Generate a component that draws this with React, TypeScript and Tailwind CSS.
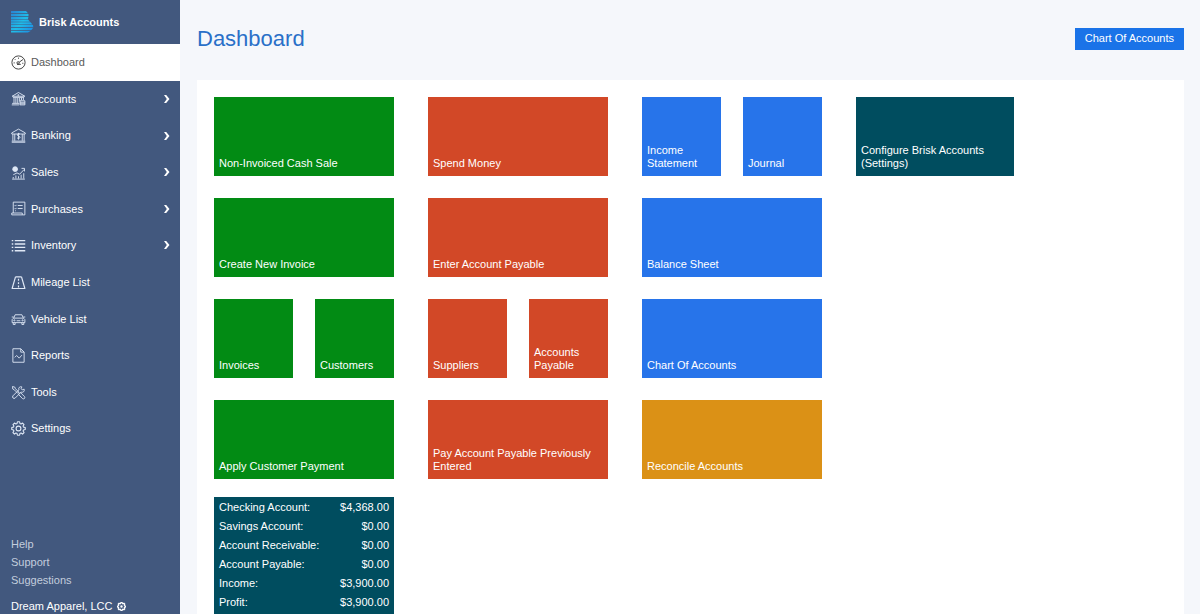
import type { ReactNode } from "react";
import clsx from "clsx";

const GEAR =
  "M8.6 1h2.8l.5 2.3 1.5.6 2-1.2 2 2-1.3 2 .6 1.5 2.3.5v2.7l-2.3.5-.6 1.5 1.3 2-2 2-2-1.3-1.5.6-.5 2.3H8.6l-.5-2.3-1.5-.6-2 1.3-2-2 1.3-2-.6-1.5L1 11.4V8.7l2.3-.5.6-1.5-1.3-2 2-2 2 1.2 1.5-.6z";

const ICONS: Record<string, ReactNode> = {
  Dashboard: (
    <>
      <circle cx="10" cy="10" r="8.8" />
      <circle cx="9.500" cy="10.500" r="1.600" />
      <path d="M11 9.500 16 6M8 12.500h5M10 3.500v1.500M5 5.500l1 1M3.500 10.500H5M15 11h1.500" />
    </>
  ),
  Accounts: (
    <>
      <path d="M1.500 7 10 2l8.500 5zM2.500 8.500h15M4 9v7M6.500 9v7M9 9v7M11.500 9v5M14 9v3M16.500 9v3M1.500 16.500H11M1 18.500h10" />
      <circle cx="9.800" cy="5.500" r=".8" />
      <path d="M12 13h6.500v5.500H12zM12 15h6.500M12 17h6.500" />
    </>
  ),
  Banking: (
    <>
      <path d="M1 6.500 10 1.500l9 5v1.500H1zM2.500 8v9M5 8v9M15 8v9M17.500 8v9M1 17.500h18M1 19h18" />
      <path d="M12 8.500c-.5-1-3.500-1.200-3.700.6-.2 2 3.700 1.200 3.700 3.300 0 2-3.500 1.800-4 .4M10 6.500v9" />
    </>
  ),
  Sales: (
    <>
      <circle cx="5.500" cy="5.500" r="3.200" fill="currentColor" />
      <path d="m3 13 5-2.500 3.500 1.800L17.500 6M14 4.500h4V8.500M3 18v-2M6.500 18v-4M10 18v-3M13.500 18v-5M17 18v-7M1.500 18.800h17" />
    </>
  ),
  Purchases: (
    <>
      <path d="M3 16V1.500h15.500V16M1 16h14v2.500h3.500V16M1 16v2.500h14" />
      <path d="m5 6 .8.800L7.200 5.200M9 6h6.500M5 10l.8.800 1.400-1.600M9 10h6.500M5.500 13h1" />
    </>
  ),
  Inventory: (
    <path d="M1 3.500h2M5 3.500h14M1 8h2M5 8h14M1 12.500h2M5 12.500h14M1 17h2M5 17h14" strokeWidth="1.800" />
  ),
  "Mileage List": (
    <path d="M6 2.500h8M5.500 18h9M6 2.500 1.500 18h4M14 2.500 18.500 18h-4M10 5v2.500M10 9.500V12M10 14v2.500" strokeWidth="1.600" />
  ),
  "Vehicle List": (
    <>
      <path d="M3.500 9.500 5.500 5h9l2 4.500M1 8h2.500M16.500 8H19M1.500 15.500v-4l2-2h13l2 2v4zM3 15.500V18h2.500v-2.500M14.500 15.500V18H17v-2.500M7.500 13h5" />
      <circle cx="4.500" cy="12.500" r=".8" />
      <circle cx="15.500" cy="12.500" r=".8" />
    </>
  ),
  Reports: (
    <path d="M2.500 1h10.500l4.500 4.500V19h-15zM13 1v4.500h4.500M5 12.500l2.500-2.500L11 13.500l3.500-4" />
  ),
  Tools: (
    <>
      <path d="m2 2 3 .8 1 2.200 4.500 4.500-1.500 1.500L4.500 6.500 2.300 5.300zM11 11l1.500-1 5.500 5.500c1.500 2-1 4-2.800 2.500L10 12.500z" />
      <path d="M17.500 5.500 15 6.500 13.500 5 14.500 2.500c-3-1-5 1.500-4 4L2.500 14.500c-1.500 2 1 4.500 3 3L13.500 9.500c2.500 1 5-1 4-4z" />
    </>
  ),
  Settings: (
    <>
      <path d={GEAR} strokeWidth="1.500" />
      <circle cx="10" cy="10" r="3.200" strokeWidth="1.500" />
    </>
  ),
};

const NAV_LINKS = [
  { title: "Dashboard", active: true },
  { title: "Accounts", nested: true },
  { title: "Banking", nested: true },
  { title: "Sales", nested: true },
  { title: "Purchases", nested: true },
  { title: "Inventory", nested: true },
  { title: "Mileage List" },
  { title: "Vehicle List" },
  { title: "Reports" },
  { title: "Tools" },
  { title: "Settings" },
];

const HELP_LINKS = ["Help", "Support", "Suggestions"];

const BALANCES = [
  ["Checking Account:", "$4,368.00"],
  ["Savings Account:", "$0.00"],
  ["Account Receivable:", "$0.00"],
  ["Account Payable:", "$0.00"],
  ["Income:", "$3,900.00"],
  ["Profit:", "$3,900.00"],
];

const Logo = () => (
  <svg viewBox="0 0 24 22" className="h-[22px] w-6" fill="none" aria-hidden="true">
    <defs>
      <linearGradient id="brisk" x1="0" y1="0" x2="24" y2="22" gradientUnits="userSpaceOnUse">
        <stop stopColor="#2a7fd0" />
        <stop offset=".5" stopColor="#1fbdea" />
        <stop offset="1" stopColor="#1c84e2" />
      </linearGradient>
    </defs>
    <path
      fill="url(#brisk)"
      d="M1 0h15l2 2.300H1zM1 2.900h17.500v2.200H1zM1 5.700h17.500l-.5 2.200H1zM1 8.500h17l2 2.200H1zM1 11.300h19.500l2 2.200H1zM1 14.100h22l.3 2.200H1zM1 16.900h22l-1.500 2.200H1zM1 19.700h20l-3 1.900H1z"
    />
  </svg>
);

const Sidebar = () => {
  return (
    <aside className="w-[180px] h-full shrink-0 flex flex-col bg-[#42587e] text-white">
      <div className="h-11 shrink-0 flex items-center gap-1 pl-[10px] text-[11px] font-bold">
        <Logo />
        <span className="pl-px">Brisk Accounts</span>
      </div>

      <nav className="h-[403px] shrink-0 grid auto-rows-fr">
        {NAV_LINKS.map(({ title, active, nested }) => (
          <a
            key={title}
            href="#"
            className={clsx(
              "flex items-center gap-[5px] pl-[11px] pr-[10px]",
              active && "bg-white text-[#5a5a5a]"
            )}
          >
            <svg
              viewBox="0 0 20 20"
              className={clsx("h-[15px] w-[15px]", active ? "text-[#333333]" : "text-[#dfe8f6]")}
              fill="none"
              stroke="currentColor"
              strokeWidth="1.200"
              strokeLinejoin="round"
              aria-hidden="true"
            >
              {ICONS[title]}
            </svg>
            <span className="flex-1">{title}</span>
            {nested && (
              <svg viewBox="0 0 6 10" className="h-[10px] w-[6px]" aria-hidden="true">
                <path fill="currentColor" d="M0 1h2.200L5.500 5 2.200 9H0l2.800-4z" />
              </svg>
            )}
          </a>
        ))}
      </nav>

      <div className="mt-auto flex flex-col pl-[11px] leading-[18px] text-[#c3cddd]">
        {HELP_LINKS.map((link) => (
          <a key={link} href="#">
            {link}
          </a>
        ))}
      </div>
      <button type="button" className="mt-[9px] flex items-center gap-1 pl-[11px] leading-4">
        Dream Apparel, LCC
        <svg viewBox="0 0 20 20" className="h-[9px] w-[9px]" fill="none" stroke="currentColor" strokeWidth="2.500" aria-hidden="true">
          <path d={GEAR} />
          <circle cx="10" cy="10" r="1.500" />
        </svg>
      </button>
    </aside>
  );
};

type TileProps = { label: string; color: string };

const Tile = ({ label, color }: TileProps) => (
  <a href="#" className={clsx("h-[79px] min-w-0 flex-1 flex items-end px-[5px] pb-[6px] leading-[13px] text-white", color)}>
    {label}
  </a>
);

const GREEN = "bg-[#028b14]";
const RED = "bg-[#d24827]";
const BLUE = "bg-[#2774ea]";
const TEAL = "bg-[#004d5f]";
const AMBER = "bg-[#db9116]";

const Row = ({ children }: { children: ReactNode }) => <div className="flex gap-[22px]">{children}</div>;

const Column = ({ children }: { children: ReactNode }) => (
  <div className="w-[180px] flex flex-col gap-[22px]">{children}</div>
);

export default function App() {
  return (
    <div className="h-screen flex overflow-hidden bg-[#f5f7fb] font-['Liberation_Sans',Arial,sans-serif] text-[11px]">
      <Sidebar />

      <main className="flex-1 min-w-0 flex flex-col pl-[17px] pr-4">
        <header className="h-20 shrink-0 flex items-center justify-between pb-[3px]">
          <h1 className="text-[22px] text-[#2a70c8]">Dashboard</h1>
          <button type="button" className="h-[22px] px-[10px] bg-[#1a73e8] text-white">
            Chart Of Accounts
          </button>
        </header>

        <section className="grow shrink-0 flex flex-wrap items-start gap-x-[34px] bg-white p-[17px]">
          <div className="flex flex-col gap-[18px]">
            <Column>
              <Row>
                <Tile label="Non-Invoiced Cash Sale" color={GREEN} />
              </Row>
              <Row>
                <Tile label="Create New Invoice" color={GREEN} />
              </Row>
              <Row>
                <Tile label="Invoices" color={GREEN} />
                <Tile label="Customers" color={GREEN} />
              </Row>
              <Row>
                <Tile label="Apply Customer Payment" color={GREEN} />
              </Row>
            </Column>
            <table className={clsx("w-[180px] border-separate border-spacing-0 pt-px pb-2 text-white", TEAL)}>
              <tbody>
                {BALANCES.map(([name, amount]) => (
                  <tr key={name} className="h-[19px]">
                    <th scope="row" className="pl-[5px] text-left font-normal">
                      {name}
                    </th>
                    <td className="pr-[5px] text-right">{amount}</td>
                  </tr>
                ))}
              </tbody>
            </table>
          </div>

          <Column>
            <Row>
              <Tile label="Spend Money" color={RED} />
            </Row>
            <Row>
              <Tile label="Enter Account Payable" color={RED} />
            </Row>
            <Row>
              <Tile label="Suppliers" color={RED} />
              <Tile label="Accounts Payable" color={RED} />
            </Row>
            <Row>
              <Tile label="Pay Account Payable Previously Entered" color={RED} />
            </Row>
          </Column>

          <Column>
            <Row>
              <Tile label="Income Statement" color={BLUE} />
              <Tile label="Journal" color={BLUE} />
            </Row>
            <Row>
              <Tile label="Balance Sheet" color={BLUE} />
            </Row>
            <Row>
              <Tile label="Chart Of Accounts" color={BLUE} />
            </Row>
            <Row>
              <Tile label="Reconcile Accounts" color={AMBER} />
            </Row>
          </Column>

          <div className="w-[158px] flex">
            <Tile label="Configure Brisk Accounts (Settings)" color={TEAL} />
          </div>
        </section>
      </main>
    </div>
  );
}
